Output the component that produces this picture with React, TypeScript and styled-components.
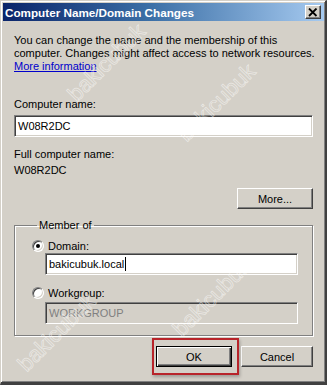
import React from "react";
import styled, { createGlobalStyle } from "styled-components";

const Global = createGlobalStyle`
  html, body { margin: 0; padding: 0; background: #d4d0c8; }
  body { font-family: "Liberation Sans", Arial, sans-serif; font-size: 11px; color: #000; }
`;

const Window = styled.div`
  position: relative;
  box-sizing: border-box;
  width: 327px;
  height: 385px;
  background: #d4d0c8;
  border-style: solid;
  border-width: 1px 2px 3px 1px;
  border-color: #d4d0c8 #404040 #404040 #d4d0c8;
  box-shadow: inset 1px 1px 0 #fff, inset -1px -1px 0 #808080;
  padding: 2px 1px 0 2px;
  display: flex;
  flex-direction: column;
  overflow: hidden;
`;

const TitleBar = styled.div`
  height: 18px;
  display: flex;
  align-items: center;
  justify-content: space-between;
  padding: 0 3px 0 2px;
  background: linear-gradient(to right, #0a246a 0%, #3a6ea5 45%, #a6caf0 100%);
`;

const Title = styled.span`
  color: #fff;
  font-weight: bold;
  font-size: 11.7px;
`;

const CloseButton = styled.div`
  box-sizing: border-box;
  width: 16px;
  height: 14px;
  background: #d4d0c8;
  border-style: solid;
  border-width: 1px;
  border-color: #fff #404040 #404040 #fff;
  box-shadow: inset -1px -1px 0 #808080;
  display: flex;
  align-items: center;
  justify-content: center;
`;

const Body = styled.div`
  flex: 1;
  display: flex;
  flex-direction: column;
  padding: 13px 11px 0 11px;
  position: relative;
  z-index: 1;
`;

const Para = styled.p`
  margin: 0;
  line-height: 13px;
  white-space: nowrap;
`;

const Link = styled.a`
  color: #0000cc;
  text-decoration: underline;
`;

const Label = styled.div<{ $mt?: number; $mb?: number }>`
  line-height: 14px;
  margin-top: ${(p) => p.$mt ?? 0}px;
  margin-bottom: ${(p) => p.$mb ?? 0}px;
`;

const Field = styled.div<{ $disabled?: boolean }>`
  box-sizing: border-box;
  height: 22px;
  background: ${(p) => (p.$disabled ? "#d4d0c8" : "#fff")};
  color: ${(p) => (p.$disabled ? "#808080" : "#000")};
  border-style: solid;
  border-width: 1px;
  border-color: #808080 #fff #fff #808080;
  box-shadow: inset 1px 1px 0 #404040, inset -1px -1px 0 #d4d0c8;
  padding: 0 3px;
  display: flex;
  align-items: center;
`;

const Caret = styled.span`
  display: inline-block;
  width: 1px;
  height: 14px;
  background: #000;
  margin-left: 1px;
`;

const ButtonRow = styled.div<{ $mt: number }>`
  display: flex;
  justify-content: flex-end;
  gap: 9px;
  margin-top: ${(p) => p.$mt}px;
`;

const Button = styled.div<{ $default?: boolean; $w?: number }>`
  box-sizing: border-box;
  width: ${(p) => p.$w ?? 76}px;
  height: 21px;
  display: flex;
  align-items: center;
  justify-content: center;
  background: #d4d0c8;
  border-style: solid;
  border-width: 1px;
  border-color: ${(p) => (p.$default ? "#000" : "#fff #404040 #404040 #fff")};
  box-shadow: ${(p) =>
    p.$default
      ? "inset 1px 1px 0 #fff, inset -1px -1px 0 #404040, inset -2px -2px 0 #808080"
      : "inset -1px -1px 0 #808080"};
`;

const Highlight = styled.div`
  position: relative;
  &::after {
    content: "";
    position: absolute;
    left: -4px;
    right: -7px;
    top: -8px;
    bottom: -8px;
    border: 2px solid #b8242a;
    box-shadow: 1px 2px 3px rgba(0, 0, 0, 0.25);
    pointer-events: none;
  }
`;

const Group = styled.fieldset`
  margin: 10px 0 0 0;
  padding: 3px 14px 11px 17px;
  border: 1px solid #808080;
  box-shadow: 1px 1px 0 #fff, inset 1px 1px 0 #fff;
  min-width: 0;
`;

const Legend = styled.legend`
  padding: 0 2px;
  margin-left: 5px;
  line-height: 13px;
`;

const RadioRow = styled.div<{ $mt?: number }>`
  display: flex;
  align-items: center;
  gap: 4px;
  height: 14px;
  margin-top: ${(p) => p.$mt ?? 0}px;
`;

const RadioCircle = styled.span<{ $checked?: boolean }>`
  box-sizing: border-box;
  width: 12px;
  height: 12px;
  border-radius: 50%;
  background: #fff;
  border-style: solid;
  border-width: 1px;
  border-color: #808080 #fff #fff #808080;
  box-shadow: inset 1px 1px 0 #404040, inset -1px -1px 0 #d4d0c8;
  display: flex;
  align-items: center;
  justify-content: center;
  &::after {
    content: "";
    width: 4px;
    height: 4px;
    border-radius: 50%;
    background: ${(p) => (p.$checked ? "#000" : "transparent")};
  }
`;

const Indent = styled.div<{ $mt: number }>`
  margin: ${(p) => p.$mt}px 0 0 13px;
`;

const Watermark = styled.span<{ $x: number; $y: number }>`
  position: absolute;
  left: ${(p) => p.$x}px;
  top: ${(p) => p.$y}px;
  font-size: 22px;
  color: transparent;
  -webkit-text-stroke: 0.7px rgba(255, 255, 255, 0.55);
  transform: rotate(-45deg);
  transform-origin: left bottom;
  pointer-events: none;
  white-space: nowrap;
  z-index: 2;
`;

export default function App() {
  return (
    <>
      <Global />
      <Window>
        <TitleBar>
          <Title>Computer Name/Domain Changes</Title>
          <CloseButton>
            <svg width="10" height="9" viewBox="0 0 10 9">
              <path d="M1 0.5 L8.5 8 M8.5 0.5 L1 8" stroke="#000" strokeWidth="1.8" />
            </svg>
          </CloseButton>
        </TitleBar>
        <Body>
          <Para>
            You can change the name and the membership of this
            <br />
            computer. Changes might affect access to network resources.
            <br />
            <Link>More information</Link>
          </Para>
          <Label $mt={24} $mb={4}>Computer name:</Label>
          <Field>W08R2DC</Field>
          <Label $mt={10} $mb={2}>Full computer name:</Label>
          <Label>W08R2DC</Label>
          <ButtonRow $mt={11}>
            <Button>More...</Button>
          </ButtonRow>
          <Group>
            <Legend>Member of</Legend>
            <RadioRow $mt={4}>
              <RadioCircle $checked />
              <span>Domain:</span>
            </RadioRow>
            <Indent $mt={0}>
              <Field>
                bakicubuk.local
                <Caret />
              </Field>
            </Indent>
            <RadioRow $mt={11}>
              <RadioCircle />
              <span>Workgroup:</span>
            </RadioRow>
            <Indent $mt={2}>
              <Field $disabled>WORKGROUP</Field>
            </Indent>
          </Group>
          <ButtonRow $mt={10}>
            <Highlight>
              <Button $default>OK</Button>
            </Highlight>
            <Button $w={72}>Cancel</Button>
          </ButtonRow>
        </Body>
        <Watermark $x={80} $y={80}>bakicubuk</Watermark>
        <Watermark $x={190} $y={120}>bakicubuk</Watermark>
        <Watermark $x={30} $y={350}>bakicubuk</Watermark>
        <Watermark $x={185} $y={315}>bakicubuk</Watermark>
      </Window>
    </>
  );
}
